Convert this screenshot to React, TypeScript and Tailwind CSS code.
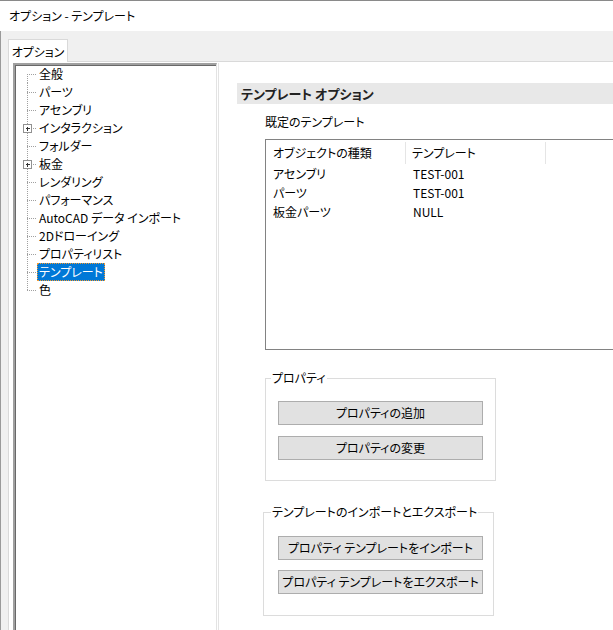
import React from "react";

interface TreeItem {
  label: string;
  plus?: boolean;
  selected?: boolean;
}

const TREE: TreeItem[] = [
  { label: "全般" },
  { label: "パーツ" },
  { label: "アセンブリ" },
  { label: "インタラクション", plus: true },
  { label: "フォルダー" },
  { label: "板金", plus: true },
  { label: "レンダリング" },
  { label: "パフォーマンス" },
  { label: "AutoCAD データ インポート" },
  { label: "2Dドローイング" },
  { label: "プロパティリスト" },
  { label: "テンプレート", selected: true },
  { label: "色" },
];

const ROWS = [
  { type: "アセンブリ", template: "TEST-001" },
  { type: "パーツ", template: "TEST-001" },
  { type: "板金パーツ", template: "NULL" },
];

function Connector({ first, last, plus }: { first: boolean; last: boolean; plus?: boolean }) {
  return (
    <svg width="22" height="18" className="shrink-0" shapeRendering="crispEdges">
      <line x1="12.5" y1={first ? 9 : 0} x2="12.5" y2={last ? 10 : 18} stroke="#a0a0a0" strokeDasharray="1 1" />
      <line x1="12" y1="9.5" x2="22" y2="9.5" stroke="#a0a0a0" strokeDasharray="1 1" />
      {plus && (
        <g>
          <rect x="8.5" y="5.5" width="8" height="8" fill="#fff" stroke="#919191" />
          <line x1="10.5" y1="9.5" x2="15" y2="9.5" stroke="#333" />
          <line x1="12.5" y1="7.5" x2="12.5" y2="12" stroke="#333" />
        </g>
      )}
    </svg>
  );
}

function Button({ children }: { children: React.ReactNode }) {
  return (
    <div className="w-[205px] h-[24px] bg-[#e1e1e1] border border-[#adadad] flex items-center justify-center leading-none">
      {children}
    </div>
  );
}

export default function App() {
  return (
    <div className="w-[613px] h-[630px] overflow-hidden flex flex-col bg-white text-black text-[12px] font-['Noto_Sans_CJK_JP','Noto_Sans',sans-serif] [font-feature-settings:'palt']">
      <div className="h-[31px] shrink-0 flex items-center pl-[9px] border-t border-[#8a8a8a] pb-[1px]">
        オプション - テンプレート
      </div>

      <div className="flex-1 min-h-0 flex flex-col bg-[#f0f0f0] border-l border-[#9a9a9a] pt-[8px] pl-[7px]">
        <div className="relative z-10 -mb-px w-[60px] h-[23px] bg-white border border-b-0 border-[#d9d9d9] flex items-center justify-center pt-[1px]">
          オプション
        </div>

        <div className="flex-1 min-h-0 flex bg-white border-t border-l border-[#d9d9d9] pt-[1px] pl-[4px]">
          <div className="w-[204px] shrink-0 border-l-2 border-t-2 border-r border-[#a0a0a0] border-r-[#e3e3e3] shadow-[inset_1px_1px_0_#696969] bg-white">
            {TREE.map((item, i) => (
              <div key={item.label} className="h-[18px] flex items-center">
                <Connector first={i === 0} last={i === TREE.length - 1} plus={item.plus} />
                <span
                  className={
                    item.selected
                      ? "h-[18px] flex items-center px-[1px] bg-[#0078d7] text-white border border-dotted border-[#f59a2e] whitespace-nowrap"
                      : "h-[18px] flex items-center px-[2px] whitespace-nowrap"
                  }
                >
                  {item.label}
                </span>
              </div>
            ))}
          </div>

          <div className="flex-1 min-w-0 ml-[1px] border-l border-[#e3e3e3] flex flex-col overflow-hidden">
            <div className="mt-[20px] ml-[18px] h-[21px] bg-[#e8e8e8] flex items-center pl-[4px] text-[13px] font-bold text-[#222] whitespace-nowrap">
              テンプレート オプション
            </div>

            <div className="ml-[46px] mt-[10px] h-[16px] flex items-center">既定のテンプレート</div>

            <div className="ml-[46px] mt-[9px] w-[400px] h-[211px] shrink-0 border border-[#828282]">
              <div className="flex mt-[2px] h-[22px]">
                <div className="w-[140px] border-r border-[#e5e5e5] pl-[7px] flex items-center">オブジェクトの種類</div>
                <div className="w-[140px] border-r border-[#e5e5e5] pl-[6px] flex items-center">テンプレート</div>
              </div>
              {ROWS.map((r) => (
                <div key={r.type} className="flex h-[19px] items-center">
                  <div className="w-[140px] pl-[7px]">{r.type}</div>
                  <div className="w-[140px] pl-[7px]">{r.template}</div>
                </div>
              ))}
            </div>

            <fieldset className="ml-[46px] mt-[20px] w-[231px] border border-[#dcdcdc] pl-[12px] pt-[15px] pb-[20px] flex flex-col gap-[11px]">
              <legend className="-ml-[7px] px-[1px] h-[16px] leading-[16px]">プロパティ</legend>
              <Button>プロパティの追加</Button>
              <Button>プロパティの変更</Button>
            </fieldset>

            <fieldset className="ml-[44px] mt-[23px] w-[231px] border border-[#dcdcdc] pl-[14px] pt-[16px] pb-[21px] flex flex-col gap-[10px]">
              <legend className="-ml-[7px] px-[1px] h-[16px] leading-[16px]">テンプレートのインポートとエクスポート</legend>
              <Button>プロパティ テンプレートをインポート</Button>
              <Button>プロパティ テンプレートをエクスポート</Button>
            </fieldset>
          </div>
        </div>
      </div>
    </div>
  );
}
